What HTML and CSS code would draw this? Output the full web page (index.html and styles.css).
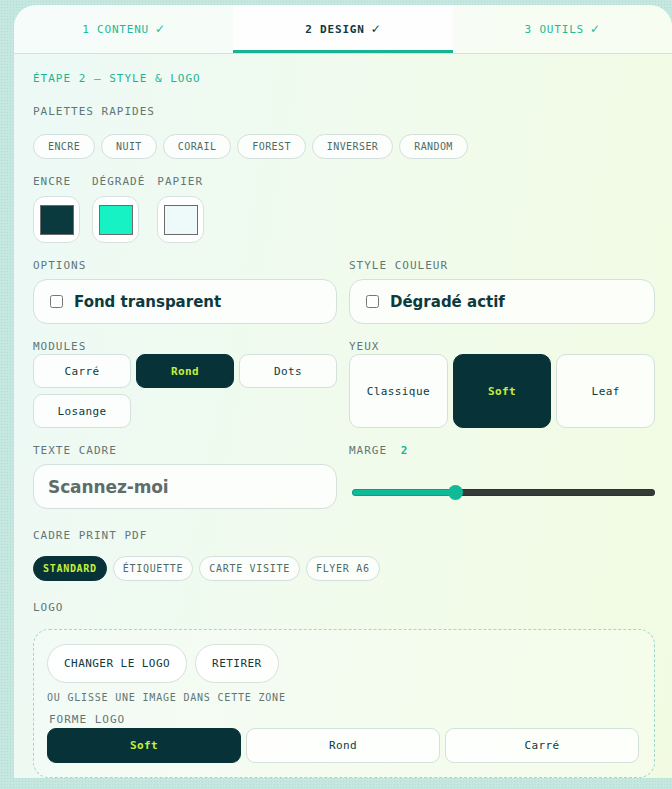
FILE: index.html
```html
<!DOCTYPE html>
<html lang="fr">
<head>
    <meta charset="UTF-8">
    <meta name="viewport" content="width=device-width, initial-scale=1.0">
    <title>QR Studio - Design</title>
    <link rel="stylesheet" href="styles.css">
</head>
<body>
    <div class="panel">
        <nav class="tabs">
            <div class="tab done">1 CONTENU <span class="tick">✓</span></div>
            <div class="tab active">2 DESIGN <span class="tick">✓</span></div>
            <div class="tab done">3 OUTILS <span class="tick">✓</span></div>
        </nav>

        <div class="panel-body">
            <div class="step">ÉTAPE 2 — STYLE &amp; LOGO</div>

            <div class="label palettes-label">PALETTES RAPIDES</div>
            <div class="chips palettes">
                <button class="chip">ENCRE</button>
                <button class="chip">NUIT</button>
                <button class="chip">CORAIL</button>
                <button class="chip">FOREST</button>
                <button class="chip">INVERSER</button>
                <button class="chip">RANDOM</button>
            </div>

            <div class="swatches">
                <div class="swatch-col">
                    <span class="label">ENCRE</span>
                    <div class="swatch"><span class="swatch-color ink"></span></div>
                </div>
                <div class="swatch-col">
                    <span class="label">DÉGRADÉ</span>
                    <div class="swatch"><span class="swatch-color gradient"></span></div>
                </div>
                <div class="swatch-col">
                    <span class="label">PAPIER</span>
                    <div class="swatch"><span class="swatch-color paper"></span></div>
                </div>
            </div>

            <div class="grid2">
                <div class="field">
                    <div class="label">OPTIONS</div>
                    <label class="check-card"><input type="checkbox"> Fond transparent</label>
                </div>
                <div class="field">
                    <div class="label">STYLE COULEUR</div>
                    <label class="check-card"><input type="checkbox"> Dégradé actif</label>
                </div>

                <div class="field">
                    <div class="label tight">MODULES</div>
                    <div class="choices modules">
                        <button class="choice">Carré</button>
                        <button class="choice selected">Rond</button>
                        <button class="choice">Dots</button>
                        <button class="choice">Losange</button>
                    </div>
                </div>
                <div class="field">
                    <div class="label tight">YEUX</div>
                    <div class="choices eyes">
                        <button class="choice">Classique</button>
                        <button class="choice selected">Soft</button>
                        <button class="choice">Leaf</button>
                    </div>
                </div>

                <div class="field">
                    <div class="label">TEXTE CADRE</div>
                    <input class="text-input" type="text" value="Scannez-moi">
                </div>
                <div class="field">
                    <div class="label">MARGE <span class="value">2</span></div>
                    <div class="range-wrap">
                        <input type="range" min="0" max="6" value="2" style="--fill: 34%">
                    </div>
                </div>
            </div>

            <div class="label section">CADRE PRINT PDF</div>
            <div class="chips print">
                <button class="chip selected">STANDARD</button>
                <button class="chip">ÉTIQUETTE</button>
                <button class="chip">CARTE VISITE</button>
                <button class="chip">FLYER A6</button>
            </div>

            <div class="label section">LOGO</div>
            <div class="dropzone">
                <div class="logo-actions">
                    <button class="pill">CHANGER LE LOGO</button>
                    <button class="pill">RETIRER</button>
                </div>
                <div class="hint">OU GLISSE UNE IMAGE DANS CETTE ZONE</div>
                <div class="label sub">FORME LOGO</div>
                <div class="choices shapes">
                    <button class="choice selected">Soft</button>
                    <button class="choice">Rond</button>
                    <button class="choice">Carré</button>
                </div>
            </div>
        </div>
    </div>
</body>
</html>
```

FILE: styles.css
```css
body {
    margin: 0;
    padding: 5px 0 40px 14px;
    background-color: #c6e7e0;
    background-image: radial-gradient(rgba(120, 210, 190, 0.35) 1px, transparent 1px);
    background-size: 3px 3px;
    font-family: "DejaVu Sans Mono", monospace;
    color: #0c3a3e;
    overflow: hidden;
}
button {
    font-family: "DejaVu Sans Mono", monospace;
    cursor: pointer;
}
.panel {
    width: 658px;
    border-radius: 22px 22px 0 0;
    background: linear-gradient(100deg, #edf9f6 0%, #f1fbec 55%, #f2fbe2 100%);
    overflow: hidden;
}
.tabs {
    display: flex;
    height: 48px;
    border-bottom: 1px solid #d3e2de;
    background: rgba(255, 255, 255, 0.45);
}
.tab {
    flex: 1;
    display: flex;
    align-items: center;
    justify-content: center;
    gap: 6px;
    font-size: 11px;
    letter-spacing: 0.8px;
    color: #27b897;
}
.tab .tick {
    font-family: "DejaVu Sans", sans-serif;
    font-size: 12px;
    letter-spacing: 0;
}
.tab.active {
    background: #fdfefd;
    color: #0c3a3e;
    font-weight: bold;
    box-shadow: inset 0 -3px 0 #17b393;
}
.panel-body {
    padding: 18px 17px 0 19px;
}
.label {
    font-size: 11px;
    line-height: 14px;
    letter-spacing: 1px;
    color: #5f7775;
    margin-bottom: 6px;
}
.label.tight {
    margin-bottom: 0;
}
.label .value {
    color: #1db394;
    font-weight: bold;
    margin-left: 6px;
}
.step {
    font-size: 11px;
    line-height: 14px;
    letter-spacing: 1px;
    color: #1db394;
}
.palettes-label {
    margin-top: 19px;
    margin-bottom: 15px;
}
.chips {
    display: flex;
    gap: 6px;
}
.chip {
    height: 25px;
    padding: 0 14px;
    border: 1px solid #d3dfdc;
    border-radius: 13px;
    background: rgba(255, 255, 255, 0.75);
    font-size: 10px;
    letter-spacing: 0.4px;
    color: #4f6b69;
}
.chips.print .chip {
    padding: 0 9px;
    letter-spacing: 0.7px;
}
.chip.selected {
    background: #073338;
    border-color: #073338;
    color: #c7ee3a;
    font-weight: bold;
}
.swatches {
    display: flex;
    gap: 12px;
    margin-top: 16px;
}
.swatch-col .label {
    display: block;
    margin-bottom: 7px;
}
.swatch {
    width: 47px;
    height: 47px;
    box-sizing: border-box;
    border: 1px solid #d6e2df;
    border-radius: 12px;
    background: #fff;
    display: flex;
    align-items: center;
    justify-content: center;
}
.swatch-color {
    width: 34px;
    height: 30px;
    box-sizing: border-box;
    border: 1px solid #6b6b6b;
}
.swatch-color.ink { background: #0b3a3e; }
.swatch-color.gradient { background: #17f2c4; }
.swatch-color.paper { background: #eefafa; }

.grid2 {
    display: grid;
    grid-template-columns: 1fr 1fr;
    column-gap: 12px;
    row-gap: 16px;
    margin-top: 16px;
}
.field {
    display: flex;
    flex-direction: column;
}
.check-card {
    height: 45px;
    box-sizing: border-box;
    display: flex;
    align-items: center;
    gap: 9px;
    padding: 0 16px;
    border: 1px solid #d3e0dc;
    border-radius: 14px;
    background: rgba(255, 255, 255, 0.75);
    font-family: "DejaVu Sans", sans-serif;
    font-size: 15px;
    font-weight: bold;
    letter-spacing: 0;
    color: #0c3a3e;
}
.check-card input {
    margin: 0 2px 0 0;
    width: 13px;
    height: 13px;
}
.choices {
    display: grid;
    grid-template-columns: repeat(3, 1fr);
    gap: 6px 5px;
    flex: 1;
}
.choice {
    min-height: 34px;
    border: 1px solid #d3e0dc;
    border-radius: 9px;
    background: rgba(255, 255, 255, 0.8);
    font-size: 11px;
    letter-spacing: 0.4px;
    color: #0c3a3e;
}
.eyes .choice {
    border-radius: 10px;
}
.choice.selected {
    background: #073338;
    border-color: #073338;
    color: #c7ee3a;
    font-weight: bold;
}
.text-input {
    height: 45px;
    box-sizing: border-box;
    padding: 0 14px;
    border: 1px solid #d3e0dc;
    border-radius: 14px;
    background: rgba(255, 255, 255, 0.8);
    font-family: "DejaVu Sans", sans-serif;
    font-size: 17px;
    font-weight: bold;
    letter-spacing: -0.1px;
    color: #5f6d6a;
    outline: none;
}
.range-wrap {
    height: 45px;
    box-sizing: border-box;
    padding-top: 11px;
    display: flex;
    align-items: center;
}
input[type="range"] {
    -webkit-appearance: none;
    appearance: none;
    width: 303px;
    height: 7px;
    margin: 0 0 0 3px;
    border-radius: 4px;
    background: linear-gradient(to right, #10b998 var(--fill), #363b38 var(--fill));
    box-shadow: inset 0 0 0 1px rgba(0, 0, 0, 0.15);
}
input[type="range"]::-webkit-slider-thumb {
    -webkit-appearance: none;
    width: 15px;
    height: 15px;
    border-radius: 50%;
    background: #10b998;
    border: none;
}
.label.section {
    margin-top: 20px;
    margin-bottom: 13px;
}
.dropzone {
    margin-top: 14px;
    padding: 14px 15px 14px 13px;
    border: 1px dashed #9ed9c9;
    border-radius: 16px;
    background: rgba(255, 255, 255, 0.25);
}
.logo-actions {
    display: flex;
    gap: 8px;
}
.pill {
    height: 39px;
    padding: 0 16px;
    border: 1px solid #d6e1de;
    border-radius: 20px;
    background: rgba(255, 255, 255, 0.85);
    font-size: 11px;
    letter-spacing: 0.45px;
    color: #0c3a3e;
}
.hint {
    margin-top: 8px;
    font-size: 10px;
    line-height: 14px;
    letter-spacing: 0.8px;
    color: #5f7775;
}
.label.sub {
    margin: 8px 0 1px 2px;
}
.shapes .choice {
    height: 35px;
}
```
